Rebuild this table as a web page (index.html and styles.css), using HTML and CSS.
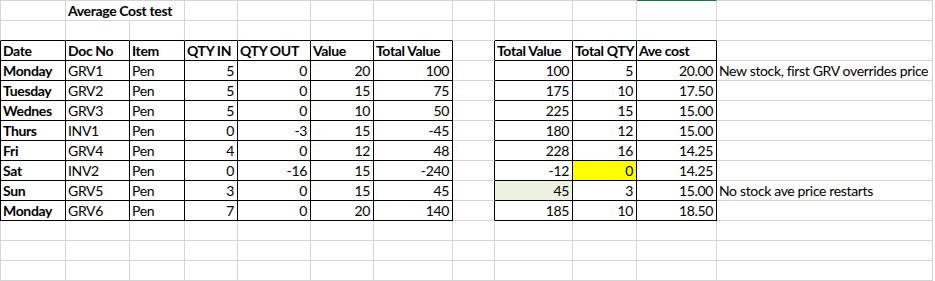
FILE: index.html
```html
<!DOCTYPE html>
<html>
<head>
<meta charset="utf-8">
<link rel="stylesheet" href="styles.css">
</head>
<body>
<div class="sheet">
  <!-- row 0 -->
  <div class="c first top"></div>
  <div class="c top b span2">Average Cost test</div>
  <div class="c top"></div>
  <div class="c top"></div>
  <div class="c top"></div>
  <div class="c top"></div>
  <div class="c top"></div>
  <div class="c top"></div>
  <div class="c top"></div>
  <div class="c top sel"></div>
  <div class="c top"></div>
  <!-- row 1 -->
  <div class="c first above"></div>
  <div class="c above"></div>
  <div class="c above"></div>
  <div class="c above"></div>
  <div class="c above"></div>
  <div class="c above"></div>
  <div class="c above"></div>
  <div class="c"></div>
  <div class="c above"></div>
  <div class="c above"></div>
  <div class="c above"></div>
  <div class="c"></div>
  <!-- row 2 headers -->
  <div class="c first blk-l blk b">Date</div>
  <div class="c blk b">Doc No</div>
  <div class="c blk b">Item</div>
  <div class="c blk b">QTY IN</div>
  <div class="c blk b">QTY OUT</div>
  <div class="c blk b">Value</div>
  <div class="c blk b">Total Value</div>
  <div class="c before"></div>
  <div class="c blk b">Total Value</div>
  <div class="c blk b">Total QTY</div>
  <div class="c blk b">Ave cost</div>
  <div class="c"></div>
  <!-- Monday -->
  <div class="c first blk-l blk b">Monday</div>
  <div class="c blk">GRV1</div>
  <div class="c blk">Pen</div>
  <div class="c blk r">5</div>
  <div class="c blk r">0</div>
  <div class="c blk r">20</div>
  <div class="c blk r">100</div>
  <div class="c before"></div>
  <div class="c blk r">100</div>
  <div class="c blk r">5</div>
  <div class="c blk r">20.00</div>
  <div class="c">New stock, first GRV overrides price</div>
  <!-- Tuesday -->
  <div class="c first blk-l blk b">Tuesday</div>
  <div class="c blk">GRV2</div>
  <div class="c blk">Pen</div>
  <div class="c blk r">5</div>
  <div class="c blk r">0</div>
  <div class="c blk r">15</div>
  <div class="c blk r">75</div>
  <div class="c before"></div>
  <div class="c blk r">175</div>
  <div class="c blk r">10</div>
  <div class="c blk r">17.50</div>
  <div class="c"></div>
  <!-- Wednes -->
  <div class="c first blk-l blk b">Wednes</div>
  <div class="c blk">GRV3</div>
  <div class="c blk">Pen</div>
  <div class="c blk r">5</div>
  <div class="c blk r">0</div>
  <div class="c blk r">10</div>
  <div class="c blk r">50</div>
  <div class="c before"></div>
  <div class="c blk r">225</div>
  <div class="c blk r">15</div>
  <div class="c blk r">15.00</div>
  <div class="c"></div>
  <!-- Thurs -->
  <div class="c first blk-l blk b">Thurs</div>
  <div class="c blk">INV1</div>
  <div class="c blk">Pen</div>
  <div class="c blk r">0</div>
  <div class="c blk r">-3</div>
  <div class="c blk r">15</div>
  <div class="c blk r">-45</div>
  <div class="c before"></div>
  <div class="c blk r">180</div>
  <div class="c blk r">12</div>
  <div class="c blk r">15.00</div>
  <div class="c"></div>
  <!-- Fri -->
  <div class="c first blk-l blk b">Fri</div>
  <div class="c blk">GRV4</div>
  <div class="c blk">Pen</div>
  <div class="c blk r">4</div>
  <div class="c blk r">0</div>
  <div class="c blk r">12</div>
  <div class="c blk r">48</div>
  <div class="c before"></div>
  <div class="c blk r">228</div>
  <div class="c blk r">16</div>
  <div class="c blk r">14.25</div>
  <div class="c"></div>
  <!-- Sat -->
  <div class="c first blk-l blk b">Sat</div>
  <div class="c blk">INV2</div>
  <div class="c blk">Pen</div>
  <div class="c blk r">0</div>
  <div class="c blk r">-16</div>
  <div class="c blk r">15</div>
  <div class="c blk r">-240</div>
  <div class="c before"></div>
  <div class="c blk r">-12</div>
  <div class="c blk r yellow">0</div>
  <div class="c blk r">14.25</div>
  <div class="c"></div>
  <!-- Sun -->
  <div class="c first blk-l blk b">Sun</div>
  <div class="c blk">GRV5</div>
  <div class="c blk">Pen</div>
  <div class="c blk r">3</div>
  <div class="c blk r">0</div>
  <div class="c blk r">15</div>
  <div class="c blk r">45</div>
  <div class="c before"></div>
  <div class="c blk r olive">45</div>
  <div class="c blk r">3</div>
  <div class="c blk r">15.00</div>
  <div class="c">No stock ave price restarts</div>
  <!-- Monday 2 -->
  <div class="c first blk-l blk b">Monday</div>
  <div class="c blk">GRV6</div>
  <div class="c blk">Pen</div>
  <div class="c blk r">7</div>
  <div class="c blk r">0</div>
  <div class="c blk r">20</div>
  <div class="c blk r">140</div>
  <div class="c before"></div>
  <div class="c blk r">185</div>
  <div class="c blk r">10</div>
  <div class="c blk r">18.50</div>
  <div class="c"></div>
  <!-- empty rows -->
  <div class="c first"></div><div class="c"></div><div class="c"></div><div class="c"></div><div class="c"></div><div class="c"></div><div class="c"></div><div class="c"></div><div class="c"></div><div class="c"></div><div class="c"></div><div class="c"></div>
  <div class="c first"></div><div class="c"></div><div class="c"></div><div class="c"></div><div class="c"></div><div class="c"></div><div class="c"></div><div class="c"></div><div class="c"></div><div class="c"></div><div class="c"></div><div class="c"></div>
  <div class="c first"></div><div class="c"></div><div class="c"></div><div class="c"></div><div class="c"></div><div class="c"></div><div class="c"></div><div class="c"></div><div class="c"></div><div class="c"></div><div class="c"></div><div class="c"></div>
</div>
</body>
</html>
```
FILE: styles.css
```css
html, body {
  margin: 0;
  padding: 0;
  background: #ffffff;
}
.sheet {
  display: grid;
  grid-template-columns: 66px 64px 55px 53px 73px 63px 79px 42px 78px 64px 80px 216px;
  grid-template-rows: 21px repeat(13, 20px);
  font-family: Lato, "Noto Sans", sans-serif;
  font-size: 14px;
  letter-spacing: -0.35px;
  color: #000;
}
.c {
  box-sizing: border-box;
  border-right: 1px solid #d4d4d4;
  border-bottom: 1px solid #d4d4d4;
  line-height: 19px;
  padding: 0 3px 0 2px;
  white-space: nowrap;
  overflow: hidden;
}
.first { border-left: 1px solid #d4d4d4; }
.top { border-top: 1px solid #d4d4d4; }
.sel { border-top-color: #217346; }
.span2 { grid-column: span 2; }
.b { font-weight: 700; }
.r { text-align: right; }
.blk {
  border-right-color: #000;
  border-bottom-color: #000;
}
.blk-l { border-left-color: #000; }
.above { border-bottom-color: #000; }
.before { border-right-color: #000; }
.yellow { background: #ffff00; }
.olive { background: #ebf1de; }
```
